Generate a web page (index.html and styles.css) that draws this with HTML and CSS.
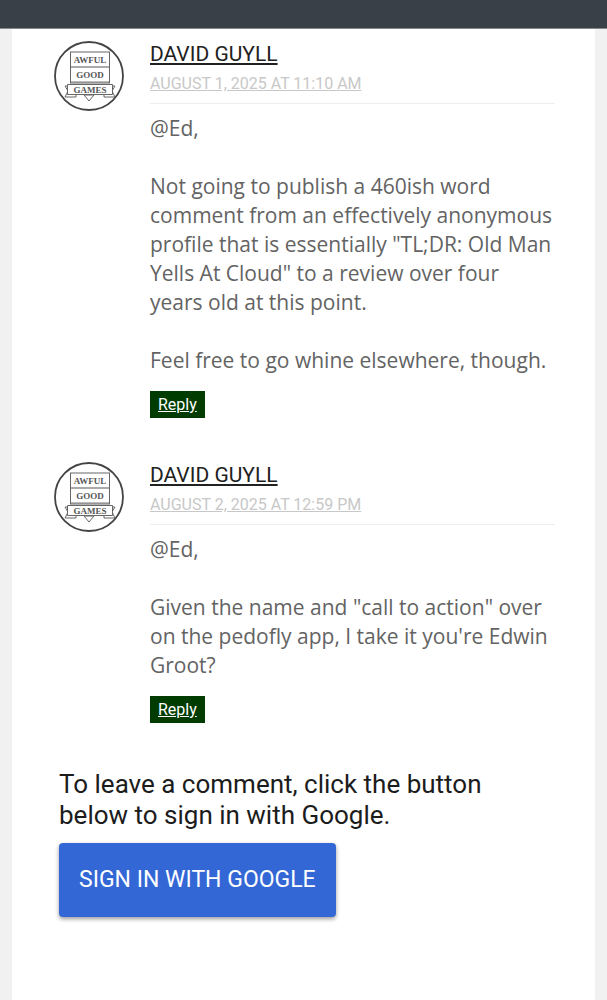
FILE: index.html
```html
<!DOCTYPE html>
<html lang="en">

<head>
    <meta charset="UTF-8">
    <meta name="viewport" content="width=device-width, initial-scale=1.0">
    <title>Comments</title>
    <link rel="stylesheet" href="styles.css">
</head>

<body>
    <header class="top-bar"></header>

    <main class="page">
        <article class="comment">
            <svg class="avatar" viewBox="0 0 70 70" role="img" aria-label="David Guyll">
                <circle cx="35" cy="35" r="34" fill="#fff" stroke="#444" stroke-width="1.8" />
                <g fill="#fff" stroke="#666" stroke-width="1">
                    <path d="M30 54l5 6 5-6z" />
                    <path d="M16 45h-5l3 5-3 6h11v-4zM56 45h5l-3 5 3 6h-11v-4z" />
                    <rect x="16.5" y="11" width="39" height="31" />
                    <path d="M17 26h38" stroke="#aaa" stroke-width="2" />
                    <path d="M17 41h38" stroke="#777" stroke-width="1" />
                    <path d="M13.5 43.5h45v10h-45z" />
                </g>
                <g class="badge-txt">
                    <text x="36" y="22">AWFUL</text>
                    <text x="36" y="37">GOOD</text>
                    <text x="36" y="52">GAMES</text>
                </g>
            </svg>
            <div class="comment-block">
                <div class="comment-header">
                    <a class="user" href="#">DAVID GUYLL</a>
                    <a class="datetime" href="#">AUGUST 1, 2025 AT 11:10 AM</a>
                </div>
                <p class="comment-content">@Ed,<br><br>Not going to publish a 460ish word comment from an effectively anonymous profile that is essentially "TL;DR: Old Man Yells At Cloud" to a review over four years old at this point.<br><br>Feel free to go whine elsewhere, though.</p>
                <a class="reply" href="#">Reply</a>
            </div>
        </article>

        <article class="comment">
            <svg class="avatar" viewBox="0 0 70 70" role="img" aria-label="David Guyll">
                <circle cx="35" cy="35" r="34" fill="#fff" stroke="#444" stroke-width="1.8" />
                <g fill="#fff" stroke="#666" stroke-width="1">
                    <path d="M30 54l5 6 5-6z" />
                    <path d="M16 45h-5l3 5-3 6h11v-4zM56 45h5l-3 5 3 6h-11v-4z" />
                    <rect x="16.5" y="11" width="39" height="31" />
                    <path d="M17 26h38" stroke="#aaa" stroke-width="2" />
                    <path d="M17 41h38" stroke="#777" stroke-width="1" />
                    <path d="M13.5 43.5h45v10h-45z" />
                </g>
                <g class="badge-txt">
                    <text x="36" y="22">AWFUL</text>
                    <text x="36" y="37">GOOD</text>
                    <text x="36" y="52">GAMES</text>
                </g>
            </svg>
            <div class="comment-block">
                <div class="comment-header">
                    <a class="user" href="#">DAVID GUYLL</a>
                    <a class="datetime" href="#">AUGUST 2, 2025 AT 12:59 PM</a>
                </div>
                <p class="comment-content">@Ed,<br><br>Given the name and "call to action" over on the pedofly app, I take it you're Edwin Groot?</p>
                <a class="reply" href="#">Reply</a>
            </div>
        </article>

        <section class="sign-in">
            <p class="sign-in-txt">To leave a comment, click the button below to sign in with Google.</p>
            <button class="sign-in-btn" type="button">SIGN IN WITH GOOGLE</button>
        </section>
    </main>
</body>

</html>
```

FILE: styles.css
```css
* {
    box-sizing: border-box;
}

body {
    display: flex;
    flex-direction: column;
    min-height: 100vh;
    margin: 0;
    background-color: #f1f1f1;
    font-family: Roboto, "Liberation Sans", sans-serif;
}

.top-bar {
    height: 29px;
    background-color: #394048;
    border-bottom: 1px solid #858a90;
}

.page {
    flex: 1;
    margin: 0 12px;
    padding: 11px 40px 40px 42px;
    background-color: #fff;
}

.comment {
    display: flex;
    gap: 26px;
    margin-bottom: 43px;
}

.avatar {
    flex: none;
    width: 70px;
    height: 70px;
    margin-top: 1px;
}

.badge-txt {
    font-family: "Liberation Serif", serif;
    font-size: 9px;
    font-weight: bold;
    text-anchor: middle;
    fill: #555;
}

.comment-block {
    flex: 1;
    min-width: 0;
}

.comment-header {
    display: flex;
    flex-direction: column;
    align-items: flex-start;
    padding-bottom: 5px;
    margin-bottom: 10px;
    border-bottom: 1px solid #eee;
    line-height: 29px;
}

.user {
    font-size: 21px;
    color: #212121;
}

.datetime {
    font-size: 16px;
    color: #c8c8c8;
}

.comment-content {
    margin: 0 0 16px;
    font-family: "Open Sans", "Noto Sans", sans-serif;
    font-size: 21px;
    line-height: 29px;
    color: #636363;
}

.reply {
    display: block;
    width: fit-content;
    padding: 0 8px;
    background-color: #003c00;
    font-size: 16px;
    line-height: 27px;
    color: #fff;
}

.sign-in {
    padding: 3px 0 0 5px;
}

.sign-in-txt {
    margin: 0 0 12px;
    font-size: 26px;
    line-height: 31px;
    color: #1c1c1c;
}

.sign-in-btn {
    padding: 22px 20px;
    border: 0;
    border-radius: 4px;
    background-color: #3367d6;
    box-shadow: 0 2px 4px rgba(0, 0, 0, .4);
    font-family: inherit;
    font-size: 23px;
    line-height: 30px;
    color: #fff;
    cursor: pointer;
}
```
